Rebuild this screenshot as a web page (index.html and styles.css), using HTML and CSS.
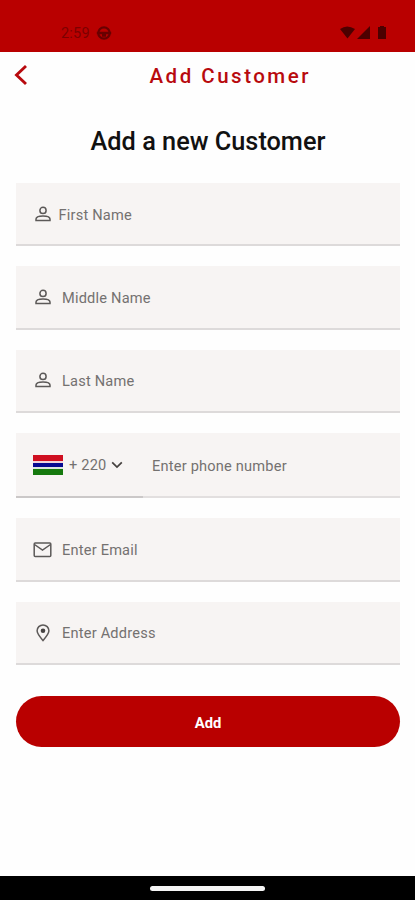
FILE: index.html
```html
<!DOCTYPE html>
<html lang="en">
<head>
<meta charset="utf-8">
<title>Add Customer</title>
<link rel="stylesheet" href="styles.css">
</head>
<body>
<svg class="defs" aria-hidden="true">
  <symbol id="person" viewBox="0 0 16 16">
    <circle cx="8" cy="4.400" r="3.100"/>
    <path d="M1 14.600v-1.500c0-2.200 3.700-3.200 7-3.200s7 1 7 3.200v1.500z"/>
  </symbol>
</svg>
<header class="status-bar">
  <span class="clock">2:59</span>
  <svg class="status-face" viewBox="0 0 16 16"><circle cx="8" cy="8" r="5.700"/><path d="M0.800 8h14.400M6 10.500h4"/></svg>
  <svg class="status-signals" viewBox="0 0 48 16">
    <path d="M1 4q7-5 15 0l-7.500 9.500z"/>
    <path d="M31 1v13H18z"/>
    <path d="M39 2h2V1h4v1h2v12h-8V2z"/>
  </svg>
</header>
<nav class="app-bar">
  <svg class="back" viewBox="0 0 14 22"><path d="M12 2L2.500 11l9.500 9"/></svg>
  <span class="app-title">Add Customer</span>
</nav>
<main class="content">
  <h1 class="heading">Add a new Customer</h1>
  <form class="form">
    <div class="field field-first"><svg class="icon icon-person"><use href="#person"/></svg><span>First Name</span></div>
    <div class="field"><svg class="icon icon-person"><use href="#person"/></svg><span>Middle Name</span></div>
    <div class="field"><svg class="icon icon-person"><use href="#person"/></svg><span>Last Name</span></div>
    <div class="phone">
      <div class="country">
        <span class="flag"></span>
        <span class="code">+ 220</span>
        <svg class="chevron" viewBox="0 0 12 8"><path d="M1.200 1.300L6 6l4.800-4.700"/></svg>
      </div>
      <div class="number">Enter phone number</div>
    </div>
    <div class="field">
      <svg class="icon icon-mail" viewBox="0 0 19 16"><rect x="1.200" y="1" width="16.600" height="13.600" rx="1"/><path d="M1.500 2.500l8 5.500 8-5.500"/></svg>
      <span>Enter Email</span>
    </div>
    <div class="field">
      <svg class="icon icon-pin" viewBox="0 0 14 18"><path d="M7 16.600C4 13 1.100 9.700 1.100 6.800a5.900 5.900 0 0 1 11.800 0C12.900 9.700 10 13 7 16.600z"/><circle class="dot" cx="7" cy="6.700" r="2.300"/></svg>
      <span>Enter Address</span>
    </div>
    <button class="submit" type="button">Add</button>
  </form>
</main>
<footer class="nav-bar"><span class="handle"></span></footer>
</body>
</html>
```
FILE: styles.css
```css
* { box-sizing: border-box; }

body {
  margin: 0;
  height: 900px;
  display: flex;
  flex-direction: column;
  overflow: hidden;
  background: #fefefe;
  font-family: Roboto, "Liberation Sans", sans-serif;
}

svg { display: block; flex: none; fill: none; }

.defs { width: 0; height: 0; position: absolute; }

.status-bar {
  height: 52px;
  flex: none;
  display: flex;
  align-items: center;
  padding: 13px 28px 0 61px;
  background: #b90000;
  color: #7c0000;
}

.clock { width: 35px; padding-top: 1px; font-size: 14.500px; letter-spacing: 0.200px; }

.status-face { width: 16px; height: 16px; stroke: #690000; stroke-width: 2.300; }

.status-signals {
  width: 48px;
  height: 16px;
  margin-left: auto;
  fill: #4c0000;
}

.app-bar {
  height: 48px;
  flex: none;
  display: flex;
  align-items: center;
  padding-left: 14px;
  color: #b80a0e;
}

.back {
  width: 14px;
  height: 22px;
  margin-bottom: 2px;
  stroke: #b80a0e;
  stroke-width: 2.900;
}

.app-title {
  margin-left: 121.500px;
  font-size: 20.500px;
  font-weight: 500;
  letter-spacing: 2.500px;
  white-space: nowrap;
}

.content { flex: 1; padding: 25px 15px 0 16px; }

.heading {
  margin: 0 0 24px;
  font-size: 25.300px;
  line-height: 34px;
  font-weight: 500;
  text-align: center;
  color: #111;
}

.form { display: flex; flex-direction: column; gap: 20px; }

.field {
  height: 63.300px;
  display: flex;
  align-items: center;
  padding: 2px 0 0 17px;
  background: #f7f4f3;
  border-bottom: 2px solid #dddada;
  color: #747170;
  font-size: 14.600px;
  letter-spacing: 0.200px;
}

.icon {
  margin-right: 10px;
  stroke: #5c5958;
  stroke-width: 1.500;
}

.icon-person { width: 16px; height: 16px; margin: 0 11.500px 2px 1.500px; }
.field-first .icon-person { margin-right: 8px; }
.icon-mail { width: 19px; height: 16px; }
.icon-pin { width: 14px; height: 18px; margin-left: 3px; margin-right: 12px; }
.dot { fill: #454241; stroke: none; }

.phone {
  height: 65.500px;
  display: flex;
  background: #f7f4f3;
  color: #747170;
  font-size: 14.600px;
  letter-spacing: 0.200px;
}

.country {
  width: 127px;
  display: flex;
  align-items: center;
  padding-left: 17px;
  border-bottom: 2px solid #cbc8c8;
}

.flag {
  width: 30px;
  height: 20px;
  background: linear-gradient(#cf0f20 0 6px, #f1d5dc 6px 8px, #070a91 8px 12px, #dce5e2 12px 14px, #16790e 14px);
}

.code { width: 42px; margin-left: 6px; padding-top: 1px; }

.chevron { width: 12px; height: 8px; stroke: #45413f; stroke-width: 1.700; }

.number {
  flex: 1;
  display: flex;
  align-items: center;
  padding: 2px 0 0 9px;
  border-bottom: 2px solid #e2dfdf;
}

.submit {
  height: 51.500px;
  margin-top: 11px;
  padding: 3px 0 0;
  border: 0;
  border-radius: 26px;
  background: #b90000;
  color: #fff;
  font: 700 14.800px Roboto, "Liberation Sans", sans-serif;
}

.nav-bar {
  height: 24px;
  flex: none;
  display: flex;
  align-items: center;
  justify-content: center;
  background: #000;
}

.handle { width: 115px; height: 5px; border-radius: 3px; background: #f5f5f5; }
```
